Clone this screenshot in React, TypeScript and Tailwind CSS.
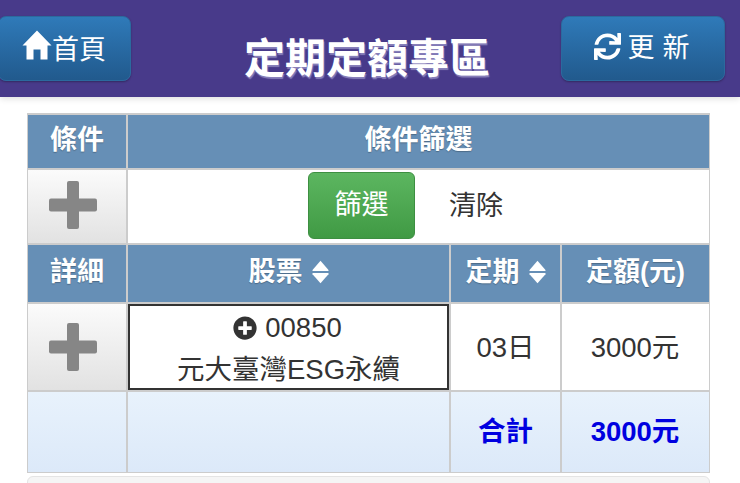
import { FaSync, FaPlusCircle } from "react-icons/fa";

const font = { fontFamily: '"Liberation Sans", "Noto Sans CJK TC", sans-serif' };

function Sort() {
  return (
    <svg width="17" height="24" viewBox="0 0 16 22" className="ml-[9px] mt-[-2px] shrink-0">
      <path d="M8 0.5 L15.5 9 Q16 10 15 10 L1 10 Q0 10 0.5 9 Z" fill="#fff" />
      <path d="M8 21.5 L15.5 13 Q16 12 15 12 L1 12 Q0 12 0.5 13 Z" fill="#fff" />
    </svg>
  );
}

function Plus() {
  return (
    <svg width="48" height="48" viewBox="0 0 48 48">
      <rect x="18" y="0" width="12" height="48" rx="2" fill="#868686" />
      <rect x="0" y="17.5" width="48" height="13" rx="2" fill="#868686" />
    </svg>
  );
}

function Home() {
  return (
    <svg width="30" height="30" viewBox="0 0 30 30" className="mb-[7px] shrink-0">
      <path
        d="M15 0.5 L29.5 15.5 L25.5 15.5 L25.5 29.5 L18.5 29.5 L18.5 19.5 L11.5 19.5 L11.5 29.5 L4.5 29.5 L4.5 15.5 L0.5 15.5 Z"
        fill="#fff"
      />
    </svg>
  );
}

const head =
  "flex items-center justify-center bg-[#668fb6] text-white font-bold text-[27px] pb-[2px] [text-shadow:0_1px_1px_rgba(0,0,0,0.25)]";
const plusCell =
  "flex items-center justify-center pr-[8px] bg-gradient-to-b from-[#fbfbfb] to-[#e2e2e2]";
const total =
  "flex items-center justify-center bg-gradient-to-b from-[#e8f2fc] to-[#dce9f9] text-[#0000e0] font-bold text-[27.5px]";
const navBtn =
  "flex items-center justify-center h-[65px] rounded-[8px] bg-gradient-to-b from-[#2f7ab9] to-[#215a8d] border border-[#2b6a9e] text-white text-[27px] shadow-[0_1px_2px_rgba(0,0,0,0.3)]";

export default function App() {
  return (
    <div style={font} className="w-[740px] h-[483px] overflow-hidden bg-white text-[#333]">
      <header className="h-[97px] bg-[#483a8a] flex items-start shadow-[0_2px_6px_rgba(0,0,0,0.12)]">
        <button className={`${navBtn} w-[133px] ml-[-2px] mt-[16px] pr-[1px]`}>
          <Home />
          <span className="mt-[3px]">首頁</span>
        </button>
        <h1 className="ml-[113px] mt-[34px] text-[41px] leading-[50px] font-bold text-white [text-shadow:1px_2px_1px_rgba(190,185,225,0.55)]">
          定期定額專區
        </h1>
        <button className={`${navBtn} w-[164px] ml-auto mr-[15px] mt-[16px] pl-[5px]`}>
          <FaSync className="text-[27px] mr-[7px] mb-[4px]" />
          <span className="tracking-[8px] text-[27px]">更新</span>
        </button>
      </header>

      <main className="ml-[27px] mt-[16px] w-[683px]">
        <div className="grid grid-cols-[98px_321px_109px_147px] grid-rows-[53px_73px_57px_86px_80px] gap-[2px] p-[1px] pt-[2px] bg-[#cccccc]">
          <div className={head}>條件</div>
          <div className={`${head} col-span-3`}>條件篩選</div>

          <div className={`${plusCell} pb-[4px]`}><Plus /></div>
          <div className="col-span-3 flex items-center bg-white pl-[180px]">
            <button className="w-[107px] h-[67px] mb-[2px] rounded-[6px] bg-gradient-to-b from-[#5cb660] to-[#409a44] border border-[#3d8f41] text-white text-[27px]">
              篩選
            </button>
            <span className="ml-[34px] text-[27px]">清除</span>
          </div>

          <div className={head}>詳細</div>
          <div className={head}>股票<Sort /></div>
          <div className={head}>定期<Sort /></div>
          <div className={head}>定額(元)</div>

          <div className={plusCell}><Plus /></div>
          <div className="flex flex-col items-center justify-center pt-[3px] bg-white border-2 border-[#333] text-[27.5px] leading-[42px]">
            <div className="flex items-center">
              <FaPlusCircle className="text-[24px] mr-[8px] ml-[-2px] text-[#333]" />
              <span>00850</span>
            </div>
            <div>元大臺灣ESG永續</div>
          </div>
          <div className="flex items-center justify-center pt-[2px] bg-white text-[27.5px]">03日</div>
          <div className="flex items-center justify-center pt-[2px] pr-[1px] bg-white text-[27.5px]">3000元</div>

          <div className={total} />
          <div className={total} />
          <div className={total}>合計</div>
          <div className={`${total} pr-[1px]`}>3000元</div>
        </div>
        <div className="mt-[3px] h-[20px] rounded-[6px] border border-[#e4e4e4] bg-[#f5f5f5]" />
      </main>
    </div>
  );
}
